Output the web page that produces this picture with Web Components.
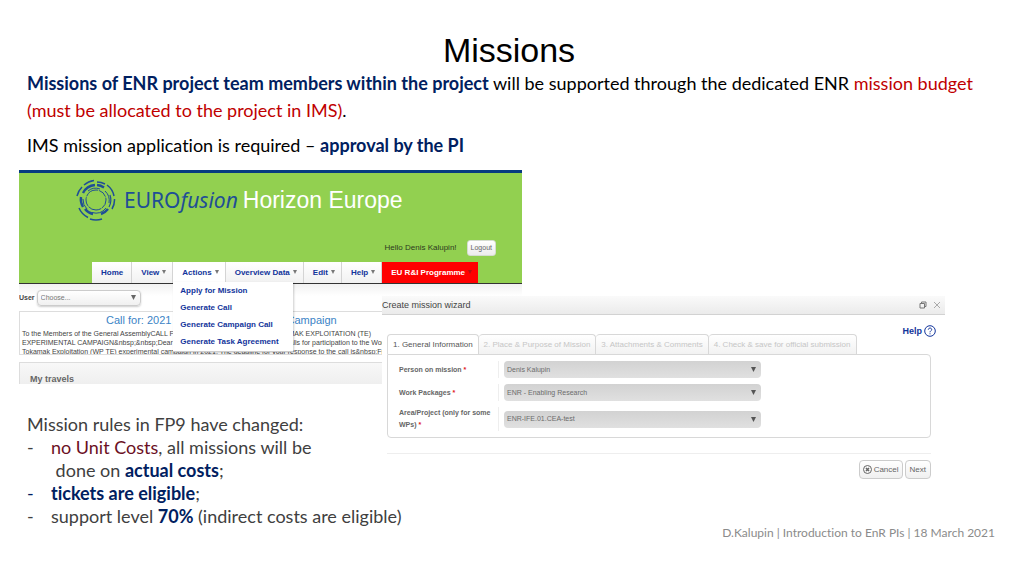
<!DOCTYPE html>
<html lang="en">
<head>
<meta charset="utf-8">
<meta name="viewport" content="width=device-width, initial-scale=1">
<title>Missions</title>
<style>
  body { margin: 0; background: #fff; color: #000; font-family: Lato, "Open Sans", sans-serif; font-variant-ligatures: none; }
  b { color: #002060; }
  em { color: #c00000; font-style: normal; }
</style>
</head>
<body>
<slide-page>
  <span slot="title">Missions</span>
  <slide-intro slot="intro">
    <p><b>Missions of ENR project team members within the project</b> will be supported through the dedicated ENR <em>mission budget (must be allocated to the project in IMS)</em>.</p>
    <p>IMS mission application is required – <b>approval by the PI</b></p>
  </slide-intro>
  <ims-portal slot="portal"></ims-portal>
  <mission-wizard slot="wizard"></mission-wizard>
  <mission-rules slot="rules"></mission-rules>
  <span slot="footer">D.Kalupin | Introduction to EnR PIs | 18 March 2021</span>
</slide-page>

<script>
const define = (name, html) => customElements.define(name, class extends HTMLElement {
  constructor() {
    super();
    const t = document.createElement('template');
    t.innerHTML = html;
    this.attachShadow({ mode: 'open' }).append(t.content.cloneNode(true));
  }
});

define('slide-page', `
<style>
  :host { display: block; padding: 30px 25px 0 19px; }
  h1 { margin: 0; font: 400 34px/40px "Liberation Sans", Arial, sans-serif; text-align: center; }
  main { display: grid; grid-template-columns: 363fr 140fr 423fr 54fr; grid-template-rows: 126px 88px auto; margin-top: 11px; }
  .portal { grid-area: 1 / 1 / 3 / 3; min-width: 0; }
  .wizard { grid-area: 2 / 2 / 4 / 4; min-width: 0; z-index: 1; }
  .rules { grid-area: 3 / 1 / 4 / 3; margin-top: 29px; padding-left: 8px; z-index: 2; }
  footer { color: #8b8b8b; font-size: 12px; line-height: 16px; text-align: right; margin-top: -3px; padding-right: 4px; }
</style>
<h1><slot name="title"></slot></h1>
<slot name="intro"></slot>
<main>
  <div class="portal"><slot name="portal"></slot></div>
  <div class="wizard"><slot name="wizard"></slot></div>
  <div class="rules"><slot name="rules"></slot></div>
</main>
<footer><slot name="footer"></slot></footer>`);

define('slide-intro', `
<style>
  :host { display: block; padding: 0 8px; font-size: 18px; line-height: 27px; }
  ::slotted(p) { margin: 0 0 8px; }
</style>
<slot></slot>`);

define('euro-logo', `
<style>
  :host { display: flex; align-items: center; color: #1f4e96; font: 400 21px/30px "Noto Sans", "Open Sans", sans-serif; white-space: nowrap; }
  svg { width: 40px; height: 42px; flex: none; margin-right: 8px; }
  i { font-style: italic; }
  .programme { margin-left: 5px; color: #fff; font: 400 23px/30px "Liberation Sans", Arial, sans-serif; }
</style>
<svg viewBox="-20 -21 40 42" fill="none" stroke="#1f4e96" aria-hidden="true">
  <circle r="10" stroke-width="1" stroke-dasharray="9 1 14 1"/>
  <path d="M-8 -9A12 12 0 0 1 4 -11M9 -9A13 13 0 0 1 13 3M10 8A13 13 0 0 1 -4 12.500M-9 9A13 13 0 0 1 -13 -1" stroke-width="1"/>
  <path d="M-13 -7A15 15 0 0 1 -1 -15M1 -15A15 15 0 0 1 8 -12.500M12 9A15 15 0 0 1 5 14M-3 14A14 14 0 0 1 -11 9M-13 7A15 15 0 0 1 -15 -3" stroke-width="2.400"/>
  <path d="M14 -5A15 15 0 0 1 13 7" stroke-width="1.200"/>
  <path d="M-19 -4A19 19 0 0 1 -14 -13M-12 -15A19 19 0 0 1 -2 -19.500M1 -18A18 18 0 0 1 9 -16M11 -15A18 18 0 0 1 18 -4M18.500 -1A18 18 0 0 1 16 9M6 19A19 19 0 0 1 -6 19M-8 17.500A19 19 0 0 1 -17 8" stroke-width="1.500"/>
</svg>
<span>EURO<i>fusion</i></span><span class="programme">Horizon Europe</span>`);

define('nav-tab', `
<style>
  :host { display: block; position: relative; border-right: 1px solid #d4d4d4; background: linear-gradient(#fff, #f1f1f1); }
  :host([open]) { background: #fff; }
  :host([accent]) { background: #f00; border: 0; flex: 0 0 95px; }
  a { display: flex; align-items: center; gap: 3px; height: 21px; padding: 0 8px 0 9px; color: #12349b; font: 700 8px/21px "Liberation Sans", Arial, sans-serif; text-decoration: none; white-space: nowrap; }
  :host([accent]) a { color: #fff; }
  svg { width: 4px; height: 5px; fill: #777; display: none; }
  :host([menu]) svg { display: block; }
  :host([menu]) a { padding-right: 6px; }
  :host([accent]) svg { fill: #b31010; }
</style>
<a href="#"><slot></slot><svg viewBox="0 0 4 5" aria-hidden="true"><path d="M0 0H4L2 4Z"/></svg></a>
<slot name="dropdown"></slot>`);

define('nav-dropdown', `
<style>
  :host { display: block; position: absolute; z-index: 1; top: 20px; left: 0; width: 120px; background: #fff; border-bottom: 1px solid #ccc; box-shadow: 1px 1px 2px #0003; }
  a { display: block; padding-left: 7px; color: #12349b; font: 700 8px/17px "Liberation Sans", Arial, sans-serif; text-decoration: none; white-space: nowrap; }
  a:first-child, a:last-child { line-height: 18px; }
  a:first-child { background: #f4f5f7; }
</style>
<a href="#">Apply for Mission</a><a href="#">Generate Call</a><a href="#">Generate Campaign Call</a><a href="#">Generate Task Agreement</a>`);

define('ims-portal', `
<style>
  :host { display: block; height: 100%; overflow: hidden; font-family: "Liberation Sans", Arial, sans-serif; color: #444; }
  header { background: #92d050; border-top: 3px solid #073b80; border-bottom: 1px solid #333; }
  euro-logo { padding: 6px 0 0 57px; }
  .session { display: flex; justify-content: flex-end; align-items: center; gap: 10px; margin-top: 19px; padding-right: 26px; font-size: 8px; line-height: 16px; color: #2d3b20; }
  button { height: 16px; padding: 0 3px; border: 1px solid #d5dcd0; border-radius: 3px; background: linear-gradient(#fff, #ececec); color: #666; font: 400 7px/14px "Liberation Sans", Arial, sans-serif; }
  nav { display: flex; margin-top: 6px; padding-left: 73px; }
  .user { display: flex; align-items: center; gap: 2px; height: 27px; background: linear-gradient(#f1f1f1, #fff 12px); }
  label { font-size: 7px; font-weight: 700; }
  .pick { display: grid; align-items: center; width: 104px; }
  select, .pick svg { grid-area: 1 / 1; }
  select { appearance: none; width: 100%; height: 16px; padding: 0 3px; border: 1px solid #ccc; border-radius: 4px; background: linear-gradient(#fff, #f0f0f0); box-shadow: 0 1px 2px #0003; color: #777; font: 400 7px/14px "Liberation Sans", Arial, sans-serif; }
  .pick svg { justify-self: end; width: 5px; height: 5px; margin-right: 5px; fill: #666; }
  article { height: 42px; border: 1px solid #ddd; padding: 0 2px; white-space: nowrap; overflow: hidden; }
  h2 { margin: 0; padding-left: 84px; color: #3b83c6; font-size: 11px; line-height: 17px; font-weight: 400; }
  p { margin: 0; font-size: 7px; line-height: 9px; }
  h3 { margin: 7px 0 0; padding: 5px 10px 0; height: 20px; border-top: 1px solid #ddd; border-left: 1px solid #ddd; background: linear-gradient(#f8f8f8, #ededed); color: #666; font-size: 9px; line-height: 22px; }
</style>
<header>
  <euro-logo></euro-logo>
  <div class="session"><span>Hello Denis Kalupin!</span><button type="button">Logout</button></div>
  <nav>
    <nav-tab>Home</nav-tab><nav-tab menu>View</nav-tab>
    <nav-tab menu open>Actions<nav-dropdown slot="dropdown"></nav-dropdown></nav-tab>
    <nav-tab menu>Overview Data</nav-tab><nav-tab menu>Edit</nav-tab><nav-tab menu>Help</nav-tab>
    <nav-tab menu accent>EU R&amp;I Programme</nav-tab>
  </nav>
</header>
<div class="user"><label for="user">User</label><div class="pick"><select id="user"><option>Choose...</option></select><svg viewBox="0 0 5 5" aria-hidden="true"><path d="M0 0H5L2.500 5Z"/></svg></div></div>
<article>
  <h2>Call for: 2021 (WP TE) Experimental Campaign</h2>
  <p>To the Members of the General AssemblyCALL FOR PARTICIPATIONS IN THE TOKAMAK EXPLOITATION (TE)</p>
  <p>EXPERIMENTAL CAMPAIGN&amp;nbsp;&amp;nbsp;Dear colleagues, the Programme Unit so calls for participation to the Work</p>
  <p>Tokamak Exploitation (WP TE) experimental campaign in 2021. The deadline for your response to the call is&amp;nbsp;Friday</p>
</article>
<h3>My travels</h3>`);

define('mission-wizard', `
<style>
  :host { display: block; font: 400 8px/12px "Liberation Sans", Arial, sans-serif; color: #555; }
  .sheet { background: #fff; }
  header { display: flex; justify-content: space-between; align-items: center; height: 18px; padding-right: 4px; border-bottom: 1px solid #d2d2d2; background: linear-gradient(#fafafa, #ebebeb); }
  h2 { margin: 0; font-size: 9px; font-weight: 400; color: #444; }
  .tools { display: flex; gap: 6px; }
  .tools button { display: flex; padding: 0; border: 0; background: none; }
  .tools svg { width: 8px; height: 8px; fill: none; }
  .help { display: flex; justify-content: flex-end; padding: 10px 9px 0 0; }
  .help a { display: flex; align-items: center; gap: 2px; color: #12349b; font-size: 9px; font-weight: 700; text-decoration: none; }
  .help svg { width: 12px; height: 12px; }
  .tabs { display: flex; margin: -3px 0 0 5px; }
  .tabs button { height: 20px; padding: 0 5px; border: 1px solid #d8d8d8; border-bottom: 0; border-left-width: 0; border-radius: 4px 4px 0 0; background: linear-gradient(#fff, #f2f2f2); color: #c6c6c6; font: inherit; white-space: nowrap; }
  .tabs button:first-child { border-left-width: 1px; background: #fff; color: #555; }
  form { display: grid; grid-template-columns: 111px 257fr 165fr; row-gap: 6px; align-items: center; margin: 0 14px 0 5px; padding: 6px 0; border: 1px solid #d8d8d8; border-radius: 0 4px 4px 4px; }
  label { grid-column: 1; padding-left: 11px; border-right: 1px solid #eee; font-size: 7px; font-weight: 700; line-height: 12px; align-self: stretch; align-content: center; color: #666; }
  label span { color: #e02020; }
  .pick { grid-column: 2; display: grid; align-items: center; margin-left: 5px; }
  select, .pick svg { grid-area: 1 / 1; }
  select { appearance: none; width: 100%; height: 17px; padding: 0 3px; border: 0; border-radius: 4px; background: linear-gradient(#d2d2d2, #e0e0e0); color: #6c6c6c; font: inherit; font-size: 7px; }
  .pick svg { justify-self: end; width: 5px; height: 5px; margin-right: 5px; fill: #555; }
  .actions { display: flex; justify-content: flex-end; gap: 2px; margin: 15px 14px 0 5px; padding: 6px 0 4px; border-top: 1px solid #eee; }
  .actions button { display: flex; align-items: center; gap: 2px; height: 19px; padding: 0 3px; border: 1px solid #ccc; border-radius: 4px; background: linear-gradient(#fff, #f0f0f0); color: #666; font: inherit; }
  .actions button:last-child { padding: 0 4px; }
  .actions svg { width: 9px; height: 9px; fill: none; stroke: #666; }
</style>
<div class="sheet">
  <header>
    <h2>Create mission wizard</h2>
    <div class="tools">
      <button type="button" aria-label="Restore"><svg viewBox="0 0 8 8" stroke="#777"><path d="M1 2.500H5.500V7H1ZM2.500 2.500V1H7V5.500H5.500"/></svg></button>
      <button type="button" aria-label="Close"><svg viewBox="0 0 8 8" stroke="#aaa"><path d="M1 1L7 7M7 1L1 7"/></svg></button>
    </div>
  </header>
  <div class="help"><a href="#">Help<svg viewBox="0 0 12 12" fill="none" stroke="#12349b" aria-hidden="true"><circle cx="6" cy="6" r="5.300"/><path d="M4.300 4.700C4.300 2.500 7.700 2.500 7.700 4.600C7.700 5.800 6 5.800 6 7.300M6 8.300V9.300"/></svg></a></div>
  <div class="tabs"><button type="button">1. General Information</button><button type="button">2. Place &amp; Purpose of Mission</button><button type="button">3. Attachments &amp; Comments</button><button type="button">4. Check &amp; save for official submission</button></div>
  <form>
    <label for="person">Person on mission <span>*</span></label>
    <div class="pick"><select id="person"><option>Denis Kalupin</option></select><svg viewBox="0 0 5 5" aria-hidden="true"><path d="M0 0H5L2.500 5Z"/></svg></div>
    <label for="packages">Work Packages <span>*</span></label>
    <div class="pick"><select id="packages"><option>ENR - Enabling Research</option></select><svg viewBox="0 0 5 5" aria-hidden="true"><path d="M0 0H5L2.500 5Z"/></svg></div>
    <label for="area">Area/Project (only for some WPs) <span>*</span></label>
    <div class="pick"><select id="area"><option>ENR-IFE.01.CEA-test</option></select><svg viewBox="0 0 5 5" aria-hidden="true"><path d="M0 0H5L2.500 5Z"/></svg></div>
  </form>
  <div class="actions">
    <button type="button"><svg viewBox="0 0 9 9" aria-hidden="true"><circle cx="4.500" cy="4.500" r="4"/><path d="M3 3L6 6M6 3L3 6" stroke-width="1.500"/></svg>Cancel</button>
    <button type="button">Next</button>
  </div>
</div>`);

define('mission-rules', `
<style>
  :host { display: block; font-size: 18px; line-height: 23px; color: #404040; white-space: nowrap; }
  p, ul { margin: 0; padding: 0; list-style: none; }
  li { display: grid; grid-template-columns: 24px auto; }
  .navy, b { color: #002060; }
  em { color: #6b0f24; font-style: normal; }
</style>
<p>Mission rules in FP9 have changed:</p>
<ul>
  <li><span>-</span><span><em>no Unit Costs</em>, all missions will be<br>&nbsp;done on <b>actual costs</b>;</span></li>
  <li><span class="navy">-</span><span><b>tickets are eligible</b>;</span></li>
  <li><span>-</span><span>support level <b>70%</b> (indirect costs are eligible)</span></li>
</ul>`);
</script>
</body>
</html>
